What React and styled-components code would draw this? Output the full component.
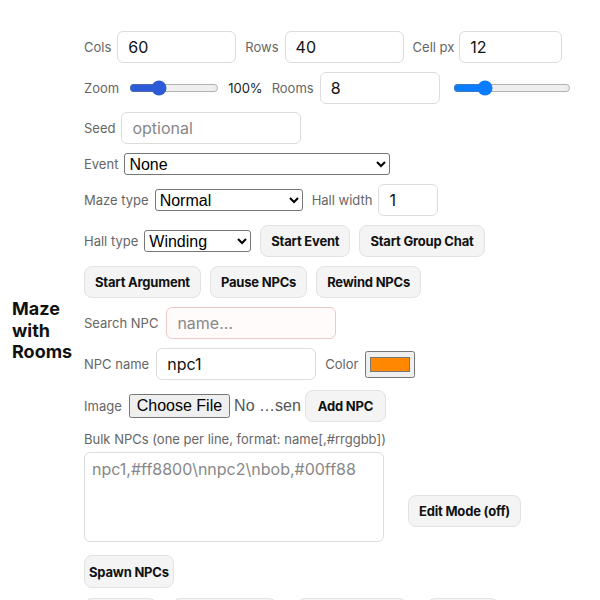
import styled, { createGlobalStyle } from "styled-components";

const Global = createGlobalStyle`
  * {
    box-sizing: border-box;
  }
  body {
    margin: 0;
    background: #fff;
    color: #111;
    font-family: Inter, "Noto Sans", sans-serif;
  }
`;

const Page = styled.div`
  display: flex;
  align-items: center;
  gap: 12px;
  padding: 31px 12px;
`;

const Title = styled.h1`
  margin: 0;
  width: 60px;
  flex-shrink: 0;
  font-size: 18px;
  font-weight: 700;
  line-height: 21.5px;
`;

const Controls = styled.div`
  display: flex;
  flex-direction: column;
  gap: 9px;
  width: 496px;
`;

const Row = styled.div`
  display: flex;
  align-items: ${(p) => p.$align || "center"};
  gap: ${(p) => p.$gap ?? 9}px;
  margin-top: ${(p) => p.$top || 0}px;
`;

const Field = styled.label`
  display: flex;
  align-items: center;
  gap: ${(p) => p.$gap || 6}px;
`;

const Label = styled.span`
  font-size: 13px;
  color: #666;
  white-space: nowrap;
`;

const Text = styled.span`
  font-size: 13px;
  color: #222;
`;

const Input = styled.input`
  width: ${(p) => p.$w}px;
  height: 32px;
  padding: 0 10px;
  border: 1px solid ${(p) => (p.$warn ? "#ecc8c8" : "#dcdcdc")};
  border-radius: 6px;
  background: ${(p) => (p.$warn ? "#fffbfb" : "#fff")};
  font-family: Inter, sans-serif;
  font-size: 16px;
  color: #111;
  outline: none;
  &::placeholder {
    color: #888;
  }
`;

const Range = styled.input`
  width: ${(p) => p.$w}px;
  margin: 0 0 0 4px;
  accent-color: ${(p) => p.$color};
`;

const Select = styled.select`
  width: ${(p) => p.$w}px;
  height: 22px;
  font-family: "Liberation Sans", Arial, sans-serif;
  font-size: 16px;
  color: #000;
  border: 1px solid #767676;
  border-radius: 3px;
  background: #fff;
`;

const File = styled.input`
  width: 176px;
  font-family: "Liberation Sans", Arial, sans-serif;
  font-size: 16px;
  color: #555;
  &::file-selector-button {
    font-family: "Liberation Sans", Arial, sans-serif;
    font-size: 16px;
    color: #000;
  }
`;

const Color = styled.input`
  width: 50px;
  height: 27px;
`;

const Button = styled.button`
  height: ${(p) => p.$h || 32}px;
  width: ${(p) => (p.$w ? `${p.$w}px` : "auto")};
  padding: 0 ${(p) => p.$pad ?? 10}px;
  border: 1px solid #e2e2e2;
  border-radius: 8px;
  background: #f4f4f4;
  font-family: Inter, sans-serif;
  font-size: 13px;
  font-weight: 700;
  letter-spacing: -0.2px;
  color: #111;
  margin-left: ${(p) => p.$ml || 0}px;
  margin-bottom: ${(p) => p.$mb || 0}px;
  white-space: nowrap;
`;

const Bulk = styled.div`
  display: flex;
  flex-direction: column;
  gap: 5px;
`;

const Area = styled.textarea`
  width: 300px;
  height: 90px;
  padding: 6px 7px;
  border: 1px solid #dcdcdc;
  border-radius: 6px;
  font-family: Inter, sans-serif;
  font-size: 16px;
  resize: none;
  outline: none;
  &::placeholder {
    color: #888;
  }
`;

export default function App() {
  return (
    <Page>
      <Global />
      <Title>Maze with Rooms</Title>
      <Controls>
        <Row>
          <Field>
            <Label>Cols</Label>
            <Input $w={119} defaultValue="60" />
          </Field>
          <Field>
            <Label>Rows</Label>
            <Input $w={119} defaultValue="40" />
          </Field>
          <Field $gap={5}>
            <Label>Cell px</Label>
            <Input $w={103} defaultValue="12" />
          </Field>
        </Row>
        <Row>
          <Field>
            <Label>Zoom</Label>
            <Range type="range" $w={90} $color="#2b5bd6" min="0" max="100" defaultValue="30" />
          </Field>
          <Text>100%</Text>
          <Field>
            <Label>Rooms</Label>
            <Input $w={120} defaultValue="8" />
          </Field>
          <Range type="range" $w={118} $color="#0a7cff" min="0" max="100" defaultValue="24" />
        </Row>
        <Row $top={-1}>
          <Field>
            <Label>Seed</Label>
            <Input $w={180} placeholder="optional" />
          </Field>
        </Row>
        <Row>
          <Field>
            <Label>Event</Label>
            <Select $w={266} defaultValue="None">
              <option>None</option>
            </Select>
          </Field>
        </Row>
        <Row>
          <Field>
            <Label>Maze type</Label>
            <Select $w={148} defaultValue="Normal">
              <option>Normal</option>
            </Select>
          </Field>
          <Field>
            <Label>Hall width</Label>
            <Input $w={60} defaultValue="1" />
          </Field>
        </Row>
        <Row>
          <Field>
            <Label>Hall type</Label>
            <Select $w={107} defaultValue="Winding">
              <option>Winding</option>
            </Select>
          </Field>
          <Button>Start Event</Button>
          <Button>Start Group Chat</Button>
        </Row>
        <Row>
          <Button>Start Argument</Button>
          <Button>Pause NPCs</Button>
          <Button>Rewind NPCs</Button>
        </Row>
        <Row>
          <Field $gap={8}>
            <Label>Search NPC</Label>
            <Input $w={170} $warn placeholder="name..." />
          </Field>
        </Row>
        <Row>
          <Field $gap={7}>
            <Label>NPC name</Label>
            <Input $w={160} defaultValue="npc1" />
          </Field>
          <Field $gap={7}>
            <Label>Color</Label>
            <Color type="color" defaultValue="#ff8800" />
          </Field>
        </Row>
        <Row $top={1} $gap={0}>
          <Field $gap={7}>
            <Label>Image</Label>
            <File type="file" />
          </Field>
          <Button $pad={12}>Add NPC</Button>
        </Row>
        <Bulk>
          <Label>Bulk NPCs (one per line, format: name[,#rrggbb])</Label>
          <Row $gap={24} $align="flex-end">
            <Area placeholder="npc1,#ff8800\nnpc2\nbob,#00ff88" />
            <Button $mb={15}>Edit Mode (off)</Button>
          </Row>
        </Bulk>
        <Row $top={4}>
          <Button $pad={4} $h={33}>Spawn NPCs</Button>
        </Row>
        <Row $top={1}>
          <Button $w={73}>Export</Button>
          <Button $w={105} $ml={6}>Import JSON</Button>
          <Button $w={110} $ml={11}>Save Snapshot</Button>
          <Button $w={72} $ml={11}>Reset</Button>
        </Row>
      </Controls>
    </Page>
  );
}
